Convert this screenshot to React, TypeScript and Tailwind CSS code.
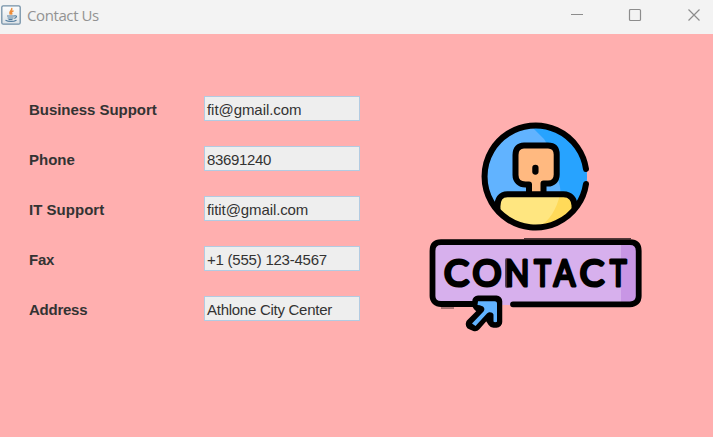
const fields = [
  { label: 'Business Support', value: 'fit@gmail.com', labelClass: 'tracking-[-0.04px]', valueClass: 'tracking-[-0.06px]' },
  { label: 'Phone', value: '83691240', labelClass: '', valueClass: 'tracking-[-0.35px]' },
  { label: 'IT Support', value: 'fitit@gmail.com', labelClass: 'tracking-[0.02px]', valueClass: 'tracking-[-0.1px]' },
  { label: 'Fax', value: '+1 (555) 123-4567', labelClass: 'tracking-[-0.2px]', valueClass: 'tracking-[-0.23px]' },
  { label: 'Address', value: 'Athlone City Center', labelClass: 'tracking-[-0.25px]', valueClass: 'tracking-[-0.27px]' },
];

const letters = [
  { char: 'C', x: 456.5, width: 25 },
  { char: 'O', x: 487, width: 29 },
  { char: 'N', x: 517.3, width: 24 },
  { char: 'T', x: 542.5, width: 16.5 },
  { char: 'A', x: 564.5, width: 21.5 },
  { char: 'C', x: 592, width: 24.5 },
  { char: 'T', x: 618.3, width: 16.5 },
];

function JavaIcon() {
  return (
    <svg width="20" height="20" viewBox="0 0 20 20" fill="none">
      <defs>
        <linearGradient id="tile" x1="0" y1="0" x2="0" y2="1">
          <stop stopColor="#fdfdfd" />
          <stop offset="1" stopColor="#dce2e7" />
        </linearGradient>
      </defs>
      <rect x=".8" y=".8" width="18.4" height="18.4" rx="1.5" fill="url(#tile)" stroke="#7390a6" strokeWidth="1.3" />
      <path d="M10.500 3c2 2-3.400 3.200-1 6.700M12.500 5.700c-2.500 1-2.600 2-1.400 3.800" stroke="#ed8b38" strokeWidth="1.5" />
      <path d="M6 11h7.500M6.600 13h6M13.500 10.800c3-.5 2.300 2-.2 2.500M4.500 15.300c3 1.500 8 1.500 11 0M7.500 14.700h4" stroke="#527c9e" strokeWidth="1.2" />
    </svg>
  );
}

function ContactArt() {
  return (
    <svg className="block" width="220" height="220" viewBox="425 118 220 220" fill="none">
      <defs>
        <clipPath id="disc"><circle cx="535.5" cy="176.500" r="51.500" /></clipPath>
      </defs>
      <g clipPath="url(#disc)">
        <path d="M480 120h112v112H480z" fill="#61b3ff" />
        <path d="M525 120h70v112h-41c8-14 8-29 6-45l-8-35-8-13z" fill="#27a3ff" />
        <path d="M498 204c0-8 4-10 9-10h57c6 0 10 4 10 12v28h-76z" fill="#ffe680" />
        <path d="M560 194h8c6 3 7 8 7 14l-20 24h-24c15-7 25-19 29-38z" fill="#ffda59" />
      </g>
      <path d="M523 146h26c5 0 8 4 8 9v21c0 6-4 9-9 9h-5v8h-14v-8h-5c-5 0-9-4-9-9v-21c0-5 3-9 8-9z" fill="#ffb980" />
      <g stroke="#000" strokeWidth="6" strokeLinecap="round" strokeLinejoin="round">
        <path d="M586 169A51 51 0 1 0 586 184" />
        <path d="M529 192v-7.500h-3.500c-6 0-10-4-10-9.500v-20c0-6 3-9.500 8.500-9.500h24c6 0 8.700 3 8.700 9v20c0 6-4 9-8.700 9h-4.500v8.500" />
        <path d="M497.500 208c-.5-9 3-13.800 10-13.800h56c7 0 11.500 5 11 12.800" />
        <path d="M535.400 168v3.500" strokeWidth="6.300" />
      </g>
      <path d="M524 238.500h107M441 308h13" stroke="#51383a" strokeWidth="1" />
      <rect x="432.500" y="242.500" width="206.500" height="62.500" rx="7" fill="#d7b0ed" />
      <path d="M621 244h10c5 0 7 3 7 7v45c0 5-2 8-7 8h-10z" fill="#c896e5" />
      <path d="M475 304h-34c-5 0-8.500-3-8.500-8v-45c0-6 3-8.800 8.500-8.800h189c6 0 8.700 3 8.700 8.800v45c0 5-3 8.300-8.700 8.300H513" stroke="#000" strokeWidth="5.800" strokeLinecap="round" />
      <path d="M507 260v26" stroke="#56425f" strokeWidth="4" strokeLinecap="round" />
      <g className="font-['Lato',sans-serif] font-normal" fontSize="36.300" fill="#000" stroke="#000" strokeWidth="3.100" strokeLinejoin="round" textAnchor="middle">
        {letters.map(({ char, x, width }, index) => (
          <text key={index} x={x} y="286.300" textLength={width} lengthAdjust="spacingAndGlyphs">{char}</text>
        ))}
      </g>
      <g strokeLinejoin="round">
        <path d="M478 301.300h18.500V322h-3l-6.500-10.200-12 13.700-3.500-1.500 13-13-6.500-6z" stroke="#000" strokeWidth="11.500" fill="#000" />
        <path d="M478 301.300h16.500c2 0 2.500 1 2.500 2.500v18c-1.500.8-3 .5-3.500-.3v-7c-1-2.500-5-3-7-.5l-11 12-3.500-2.500 11.500-12c2-2.500 1-6-6-6.500z" fill="#61b3ff" />
      </g>
    </svg>
  );
}

export default function App() {
  return (
    <div className="flex h-[437px] w-[713px] flex-col overflow-hidden bg-[#ffafaf] font-['Liberation_Sans',Arial,sans-serif] text-[15px] text-[#333]">
      <header className="flex h-[34px] shrink-0 items-start justify-between bg-[#f3f3f3] pl-px pr-3 text-[#929292]">
        <div className="flex items-center gap-[6px] pt-[5px]">
          <JavaIcon />
          <h1 className="font-['Open_Sans',sans-serif] text-[15px] leading-5 tracking-[-0.4px]">Contact Us</h1>
        </div>
        <svg className="mt-2" width="131" height="14" viewBox="0 0 131 14" fill="none" stroke="#8c8c8c" strokeWidth="1.200">
          <path d="M1 6.500h12M118.500 1.500l11 11M129.500 1.500l-11 11" />
          <rect x="59.500" y="1.500" width="11" height="11" rx="1" />
        </svg>
      </header>
      <main className="flex flex-1 items-start">
        <div className="ml-[29px] flex w-[331px] flex-col gap-[25px] pt-[62px]">
          {fields.map(({ label, value, labelClass, valueClass }) => (
            <div key={label} className="flex h-[25px] items-center">
              <div className={`w-[175px] pt-[3px] font-bold leading-[18px] ${labelClass}`}>{label}</div>
              <div className={`h-[25px] w-[156px] border border-[#b2cbe2] bg-[#eee] pl-[2px] pt-[4px] leading-[18px] whitespace-nowrap ${valueClass}`}>{value}</div>
            </div>
          ))}
        </div>
        <div className="ml-[65px] pt-[84px]"><ContactArt /></div>
      </main>
    </div>
  );
}
